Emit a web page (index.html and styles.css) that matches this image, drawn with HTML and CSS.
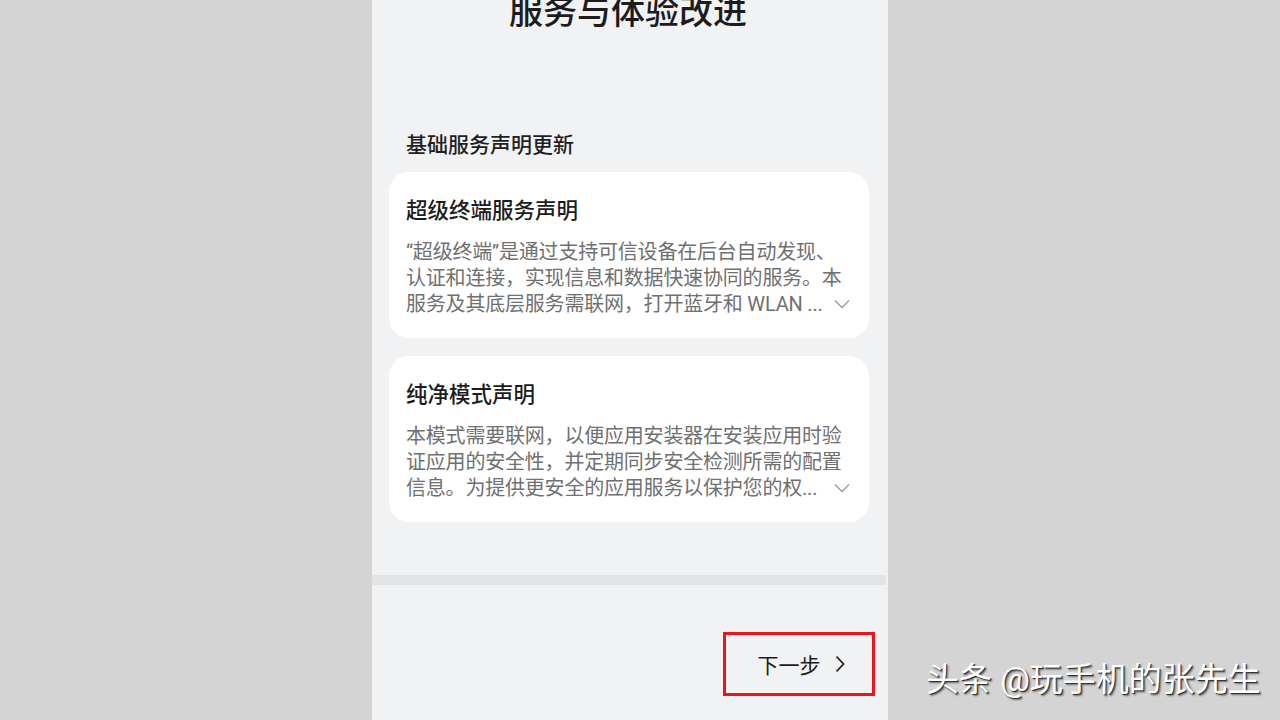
FILE: index.html
```html
<!DOCTYPE html>
<html lang="zh-CN">
<head>
    <meta charset="UTF-8">
    <meta name="viewport" content="width=device-width, initial-scale=1.0">
    <title>服务与体验改进</title>
    <link rel="stylesheet" href="styles.css">
</head>
<body>
    <main class="screen">
        <section class="content">
            <h1 class="page-title">服务与体验改进</h1>
            <h2 class="section-title">基础服务声明更新</h2>

            <article class="card">
                <h3 class="card-title">超级终端服务声明</h3>
                <p class="card-text">“超级终端”是通过支持可信设备在后台自动发现、认证和连接，实现信息和数据快速协同的服务。本</p>
                <p class="card-text last-line"><span>服务及其底层服务需联网，打开蓝牙和 WLAN ...</span><svg class="chevron" width="16" height="10" viewBox="0 0 16 10"><path d="M1 1.5 L8 8.5 L15 1.5" fill="none" stroke="#9a9a9a" stroke-width="1.4"/></svg></p>
            </article>

            <article class="card">
                <h3 class="card-title">纯净模式声明</h3>
                <p class="card-text">本模式需要联网，以便应用安装器在安装应用时验证应用的安全性，并定期同步安全检测所需的配置</p>
                <p class="card-text last-line"><span>信息。为提供更安全的应用服务以保护您的权...</span><svg class="chevron" width="16" height="10" viewBox="0 0 16 10"><path d="M1 1.5 L8 8.5 L15 1.5" fill="none" stroke="#9a9a9a" stroke-width="1.4"/></svg></p>
            </article>
        </section>

        <div class="divider"></div>

        <footer class="bottom-bar">
            <button class="next-button">下一步<svg class="next-arrow" width="10" height="18" viewBox="0 0 10 18"><path d="M1.5 1.5 L8.5 9 L1.5 16.5" fill="none" stroke="#222" stroke-width="1.8"/></svg></button>
        </footer>
    </main>

    <div class="watermark">头条 @玩手机的张先生</div>
</body>
</html>
```

FILE: styles.css
```css
body {
    margin: 0;
    height: 720px;
    overflow: hidden;
    background-color: #d4d4d4;
    font-family: Roboto, "Noto Sans CJK SC", sans-serif;
    display: flex;
}
.screen {
    margin-left: 372px;
    width: 516px;
    height: 720px;
    background: #f1f2f4;
    display: flex;
    flex-direction: column;
}
.content {
    padding: 0 19px 0 17px;
    height: 575px;
    box-sizing: border-box;
}
.page-title {
    margin: -9px 0 0;
    font-size: 34px;
    line-height: 42px;
    font-weight: 500;
    text-align: center;
    color: #1c1c1c;
    padding-right: 2px;
}
.section-title {
    margin: 97px 0 12px 17px;
    font-size: 21px;
    line-height: 30px;
    font-weight: 500;
    color: #1f1f1f;
}
.card {
    background: #fff;
    border-radius: 20px;
    padding: 24px 17px 21px;
    margin-bottom: 18px;
}
.card-title {
    margin: 0 0 13px;
    font-size: 21.5px;
    line-height: 30px;
    font-weight: 500;
    color: #1c1c1c;
}
.card-text {
    margin: 0;
    font-size: 20px;
    line-height: 26px;
    color: #707070;
    letter-spacing: -0.2px;
}
.last-line {
    display: flex;
    align-items: center;
    white-space: nowrap;
}
.chevron {
    margin-left: auto;
    margin-right: 2px;
    flex-shrink: 0;
}
.divider {
    height: 10px;
    background: #e3e4e6;
    margin-right: 2px;
}
.bottom-bar {
    flex: 1;
    display: flex;
    justify-content: flex-end;
    align-items: flex-start;
    padding: 47px 13px 0 0;
}
.next-button {
    width: 152px;
    height: 64px;
    border: 3px solid #e8141e;
    background: transparent;
    font-family: inherit;
    font-size: 21px;
    color: #1c1c1c;
    display: flex;
    align-items: center;
    justify-content: center;
    gap: 14px;
    padding: 0 0 0 4px;
    box-sizing: border-box;
}
.watermark {
    position: absolute;
    left: 926px;
    top: 658px;
    font-size: 33px;
    line-height: 44px;
    color: #fff;
    text-shadow: 1px 1px 0 #333, 2px 2px 2px rgba(0, 0, 0, 0.5);
}
```
